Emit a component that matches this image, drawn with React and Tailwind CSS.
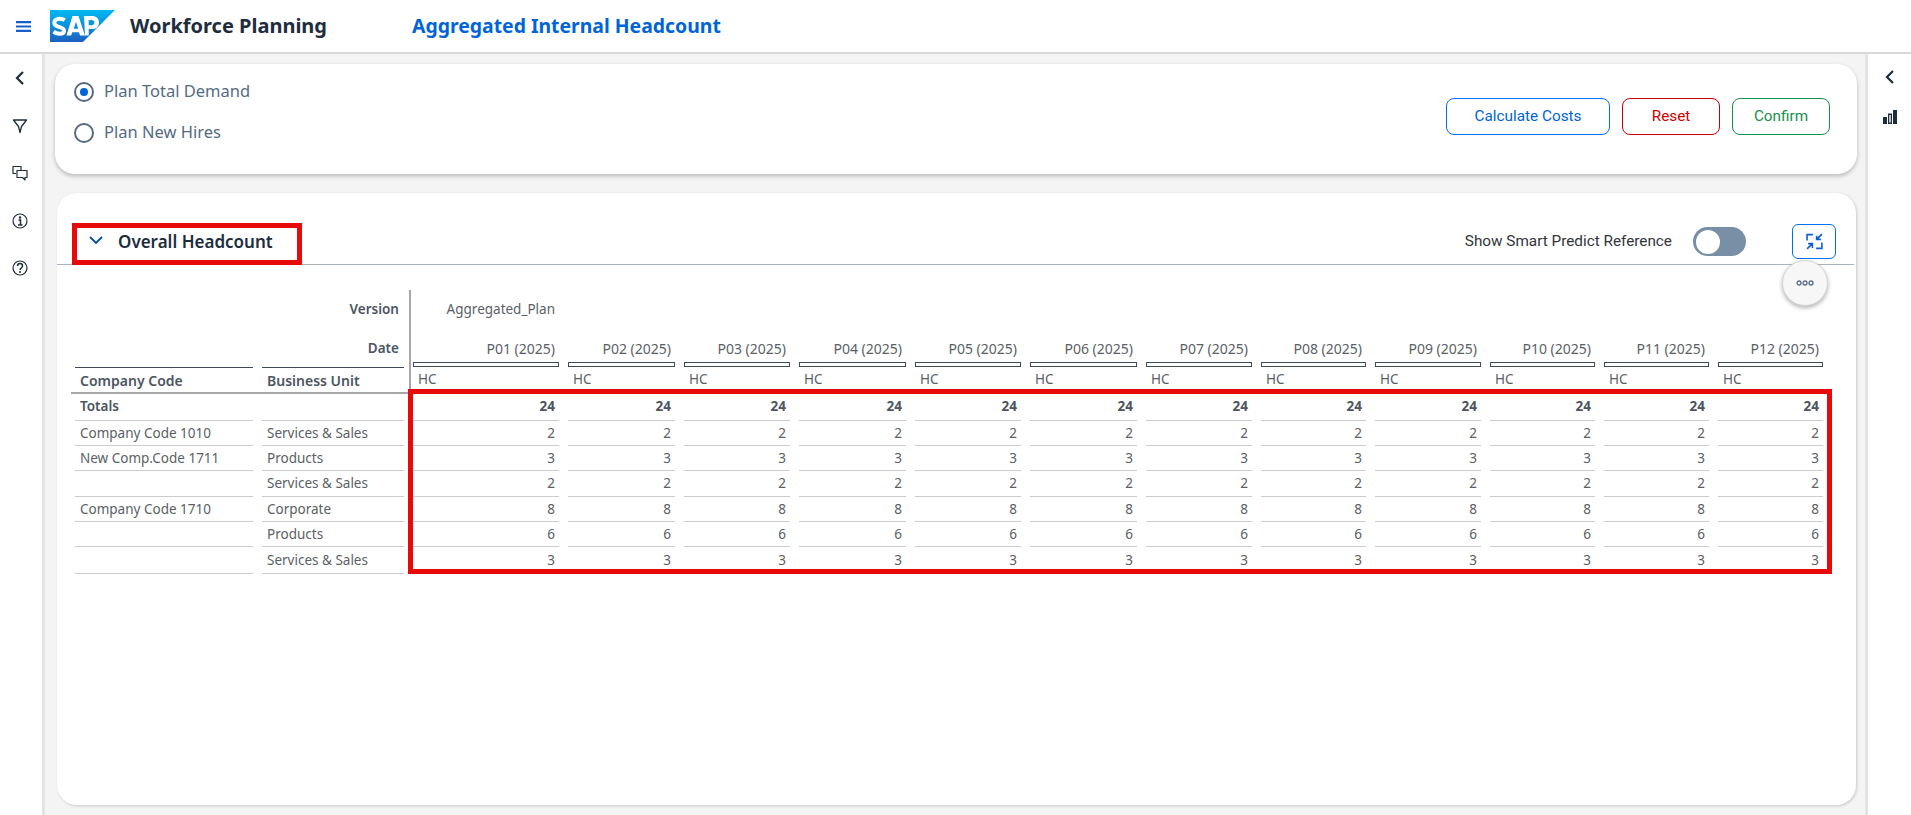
import React from "react";

const sans = "font-['Noto_Sans','Liberation_Sans',sans-serif]";
const periods = Array.from({ length: 12 }, (_, i) => `P${String(i + 1).padStart(2, "0")} (2025)`);
const rows = [
  { code: "Totals", unit: "", value: 24, bold: true, h: "h-[27px]" },
  { code: "Company Code 1010", unit: "Services & Sales", value: 2, h: "h-[25px]" },
  { code: "New Comp.Code 1711", unit: "Products", value: 3, h: "h-[25px]" },
  { code: "", unit: "Services & Sales", value: 2, h: "h-[26px]" },
  { code: "Company Code 1710", unit: "Corporate", value: 8, h: "h-[25px]" },
  { code: "", unit: "Products", value: 6, h: "h-[25px]" },
  { code: "", unit: "Services & Sales", value: 3, h: "h-[27px]" },
];

function SapLogo() {
  return (
    <svg width="65" height="32" viewBox="0 0 65 32" className="shrink-0">
      <defs>
        <linearGradient id="sapg" x1="0" y1="0" x2="0" y2="1">
          <stop offset="0" stopColor="#00b8f1" />
          <stop offset="0.5" stopColor="#0a8fdc" />
          <stop offset="1" stopColor="#1e5fbf" />
        </linearGradient>
      </defs>
      <path d="M0 0H65L33 32H0Z" fill="url(#sapg)" />
      <path
        d="M3.500 21.800c2 1.300 4.200 1.900 6.300 1.900 2.700 0 4.300-1 4.300-3 0-4.500-9.800-2.500-9.800-7.900 0-2.400 2.100-4 5.200-4 1.900 0 3.700.4 5.300 1.300"
        fill="none"
        stroke="#fff"
        strokeWidth="4"
      />
      <path
        d="M16.500 25.500 22.500 6h6l6.500 19.500h-5l-1-3.200h-6.800l-1 3.200ZM23.800 18.800h4.400L26 11.800ZM34 6h8c4.300 0 7 2.500 7 6.400 0 4.200-2.900 6.700-7.200 6.700h-3.100v6.400H35ZM38.700 10v5.200h2.700c1.900 0 3-1 3-2.600 0-1.700-1.100-2.600-3-2.600Z"
        fill="#fff"
        fillRule="evenodd"
      />
    </svg>
  );
}

function Radio({ checked, label }) {
  return (
    <div className="flex items-center gap-[10px] h-[21px]">
      <span className="w-[20px] h-[20px] rounded-full border-2 border-[#556b82] flex items-center justify-center bg-white">
        {checked && <span className="w-[8px] h-[8px] rounded-full bg-[#0064d9]" />}
      </span>
      <span className={`${sans} text-[16.500px] text-[#556b82]`}>{label}</span>
    </div>
  );
}

function OutlineButton({ label, className }) {
  return (
    <button className={`h-[37px] rounded-[8px] border bg-white font-['Roboto',sans-serif] text-[15.300px] ${className}`}>
      {label}
    </button>
  );
}

const sideIconClass = "w-[16px] h-[16px]";

export default function App() {
  return (
    <div className="w-[1911px] h-[815px] overflow-hidden flex flex-col bg-[#f4f4f4]">
      <header className="h-[54px] shrink-0 bg-white border-b-2 border-[#d9d9d9] flex items-center">
        <div className="w-[50px] shrink-0 flex justify-center pr-[2px]">
          <svg width="15" height="11" viewBox="0 0 15 11" className="-ml-[2px]">
            <path d="M0 0h15v2.200H0zM0 4.400h15v2.200H0zM0 8.800h15V11H0z" fill="#1560c8" />
          </svg>
        </div>
        <SapLogo />
        <div className={`${sans} ml-[15px] w-[282px] shrink-0 text-[20px] font-bold text-[#1d2d3e]`}>
          Workforce Planning
        </div>
        <div className={`${sans} text-[19.400px] font-bold text-[#0064d9]`}>Aggregated Internal Headcount</div>
      </header>

      <div className="flex flex-1 min-h-0">
        <aside className="w-[45px] shrink-0 bg-white border-r-[3px] border-[#e3e4e6] flex flex-col items-center pt-[16px] gap-[31.500px] text-[#1d2d3e] pr-[3px]">
          <svg className={sideIconClass} viewBox="0 0 16 16" fill="none" stroke="#1d2d3e" strokeWidth="2.200"><path d="M11 2 5 8l6 6" /></svg>
          <svg className={sideIconClass} viewBox="0 0 16 16" fill="none" stroke="#1d2d3e" strokeWidth="1.300" strokeLinejoin="round"><path d="M1.500 2h13l-5 6.500-1.500 6-1.500-6Z" /></svg>
          <svg className={sideIconClass} viewBox="0 0 16 16" fill="none" stroke="#1d2d3e" strokeWidth="1.200" strokeLinejoin="round"><path d="M9 5V1.500H1v7h3M5 5.500h10v7h-2v2.500l-2.500-2.500H5Z" /></svg>
          <svg className={sideIconClass} viewBox="0 0 16 16" fill="none" stroke="#1d2d3e"><circle cx="8" cy="8" r="7" strokeWidth="1.200" /><path d="M6.500 7h2v5M6 12h4.500" strokeWidth="1.500" /><circle cx="8" cy="4.500" r="1.200" fill="#1d2d3e" stroke="none" /></svg>
          <svg className={sideIconClass} viewBox="0 0 16 16" fill="none" stroke="#1d2d3e"><circle cx="8" cy="8" r="7" strokeWidth="1.200" /><path d="M5.500 6c0-3.200 5-3.200 5 0 0 2-2.500 2-2.500 4" strokeWidth="1.500" /><circle cx="8" cy="12" r="1" fill="#1d2d3e" stroke="none" /></svg>
        </aside>

        <main className="flex-1 min-w-0 flex flex-col pt-[10px] pl-[10px] pr-[8px] pb-[10px] gap-[19px]">
          <section className="h-[110px] shrink-0 bg-white rounded-[20px] shadow-[0_2px_4px_rgba(0,0,0,0.25)] flex justify-between pl-[19px] pr-[27px]">
            <div className="flex flex-col gap-[20px] pt-[17px]">
              <Radio checked label="Plan Total Demand" />
              <Radio label="Plan New Hires" />
            </div>
            <div className="flex gap-[12px] pt-[34px]">
              <OutlineButton label="Calculate Costs" className="w-[164px] border-[#0070f2] text-[#0064d9]" />
              <OutlineButton label="Reset" className="w-[98px] border-[#cc0000] text-[#cc0000]" />
              <OutlineButton label="Confirm" className="w-[98px] border-[#188f4b] text-[#188f4b]" />
            </div>
          </section>

          <section className="flex-1 min-h-0 ml-[2px] mr-[1px] bg-white rounded-[20px] shadow-[1px_1px_3px_rgba(0,0,0,0.18)] relative">
            <div className="h-[72px] border-b border-[#a9b4be] flex items-center mr-[2px] pt-[26px] pl-[32px] pr-[18px] justify-between">
              <div className="flex items-center">
                <svg width="14" height="9" viewBox="0 0 14 9" fill="none" stroke="#0a4fb5" strokeWidth="1.900" className="-mt-[2px]"><path d="m1 1 6 6 6-6" /></svg>
                <span className={`${sans} ml-[15px] text-[17px] font-semibold text-[#1d2d3e]`}>Overall Headcount</span>
              </div>
              <div className="flex items-center">
                <span className="font-['Roboto',sans-serif] text-[15.300px] text-[#32363a]">Show Smart Predict Reference</span>
                <span className="ml-[21px] w-[53px] h-[29px] rounded-full bg-[#788fa6] flex items-center pl-[3px]">
                  <span className="w-[24px] h-[24px] rounded-full bg-white" />
                </span>
                <button className="ml-[46px] w-[44px] h-[35px] rounded-[6px] border border-[#0070f2] bg-white flex items-center justify-center">
                  <svg width="17" height="17" viewBox="0 0 16 16" fill="none" stroke="#0a5fd8" strokeWidth="1.500">
                    <path d="M1 7V1.500h5.500M15 9v5.500H9.500M15 1 10 6M10 2.500V6h4M1 15l5-5M2 10h4v4" />
                  </svg>
                </button>
              </div>
            </div>

            {/* floating menu button */}
            <button className="absolute left-[1725px] top-[67px] w-[46px] h-[46px] rounded-full bg-[#f7f7f7] border border-[#d5d5d5] shadow-[0_2px_4px_rgba(0,0,0,0.3)] flex items-center justify-center">
              <svg width="18" height="6" viewBox="0 0 18 6" fill="none" stroke="#5a6c80" strokeWidth="1.300">
                <circle cx="3" cy="3" r="2" /><circle cx="9" cy="3" r="2" /><circle cx="15" cy="3" r="2" />
              </svg>
            </button>

            {/* title highlight */}
            <div className="absolute left-[15px] top-[30px] w-[230px] h-[42px] border-[5px] border-[#e60a0a]" />

            <div className={`${sans} relative ml-[18px] mt-[25px] grid grid-cols-[178px_142px_146px_107px_106px_107px_106px_107px_106px_105px_106px_105px_105px_105px] gap-x-[9px] text-[13.500px] text-[#5a5f66] w-fit`}>
              {/* Version */}
              <div className="col-span-2 h-[36px] pt-[2px] flex items-center justify-end pr-[5px] font-semibold text-[#4c5561]">Version</div>
              <div className="h-[36px] pt-[2px] flex items-center justify-end pr-[4px] whitespace-nowrap">Aggregated_Plan</div>
              <div className="col-span-11" />
              {/* Date */}
              <div className="col-span-2 h-[36px] pt-[8px] flex items-center justify-end pr-[5px] font-semibold text-[#4c5561]">Date</div>
              {periods.map((p) => (
                <div key={p} className="h-[36px] pt-[8px] flex items-center justify-end pr-[4px] whitespace-nowrap text-[14px]">{p}</div>
              ))}
              {/* bars */}
              <div className="col-span-2 h-[5px]" />
              {periods.map((p) => (
                <div key={p} className="h-[5px] border border-[#3d4a59] bg-white" />
              ))}
              {/* Column headers */}
              <div className="h-[25px] border-t border-[#3d4a59] pl-[5px] flex items-center font-semibold text-[14px] text-[#4c5561]">Company Code</div>
              <div className="h-[25px] border-t border-[#3d4a59] pl-[5px] flex items-center font-semibold text-[14px] text-[#4c5561]">Business Unit</div>
              {periods.map((p) => (
                <div key={p} className="h-[25px] pl-[5px] flex items-center">HC</div>
              ))}
              <div className="col-span-2 h-[2px] bg-[#a8a8a8] -ml-[4px] -mr-[6px]" />
              <div className="col-span-12" />
              {/* Body */}
              {rows.map((r, idx) => (
                <React.Fragment key={idx}>
                  <div className={`${r.h} border-b border-[#cccccc] pl-[5px] flex items-center ${r.bold ? "font-semibold text-[#4c5561] pb-[2px]" : ""}`}>{r.code}</div>
                  <div className={`${r.h} border-b border-[#cccccc] pl-[5px] flex items-center`}>{r.unit}</div>
                  {periods.map((p) => (
                    <div key={p} className={`${r.h} border-b border-[#cccccc] pr-[4px] flex items-center justify-end ${r.bold ? "font-bold text-[#4c5561] pb-[2px]" : ""}`}>{r.value}</div>
                  ))}
                </React.Fragment>
              ))}
              {/* vertical divider */}
              <div className="absolute left-[334px] top-0 w-[2px] h-[102px] bg-[#a8a8a8]" />
              {/* data highlight */}
              <div className="absolute left-[333px] top-[99px] w-[1424px] h-[185px] border-[5px] border-[#e60a0a] pointer-events-none" />
            </div>
          </section>
        </main>

        <aside className="w-[46px] shrink-0 bg-white border-l-[3px] border-[#e3e4e6] flex flex-col items-center pt-[15px] gap-[25px]">
          <svg width="16" height="16" viewBox="0 0 16 16" fill="none" stroke="#1d2d3e" strokeWidth="2.200"><path d="M11 2 5 8l6 6" /></svg>
          <svg width="14" height="14" viewBox="0 0 14 14"><path d="M0 7h4v7H0zM5 3.500h4V14H5zM10 0h4v14h-4z" fill="#1d2d3e" /><path d="M6.300 5h1.400v7.500H6.300z" fill="#fff" /></svg>
        </aside>
      </div>
    </div>
  );
}
